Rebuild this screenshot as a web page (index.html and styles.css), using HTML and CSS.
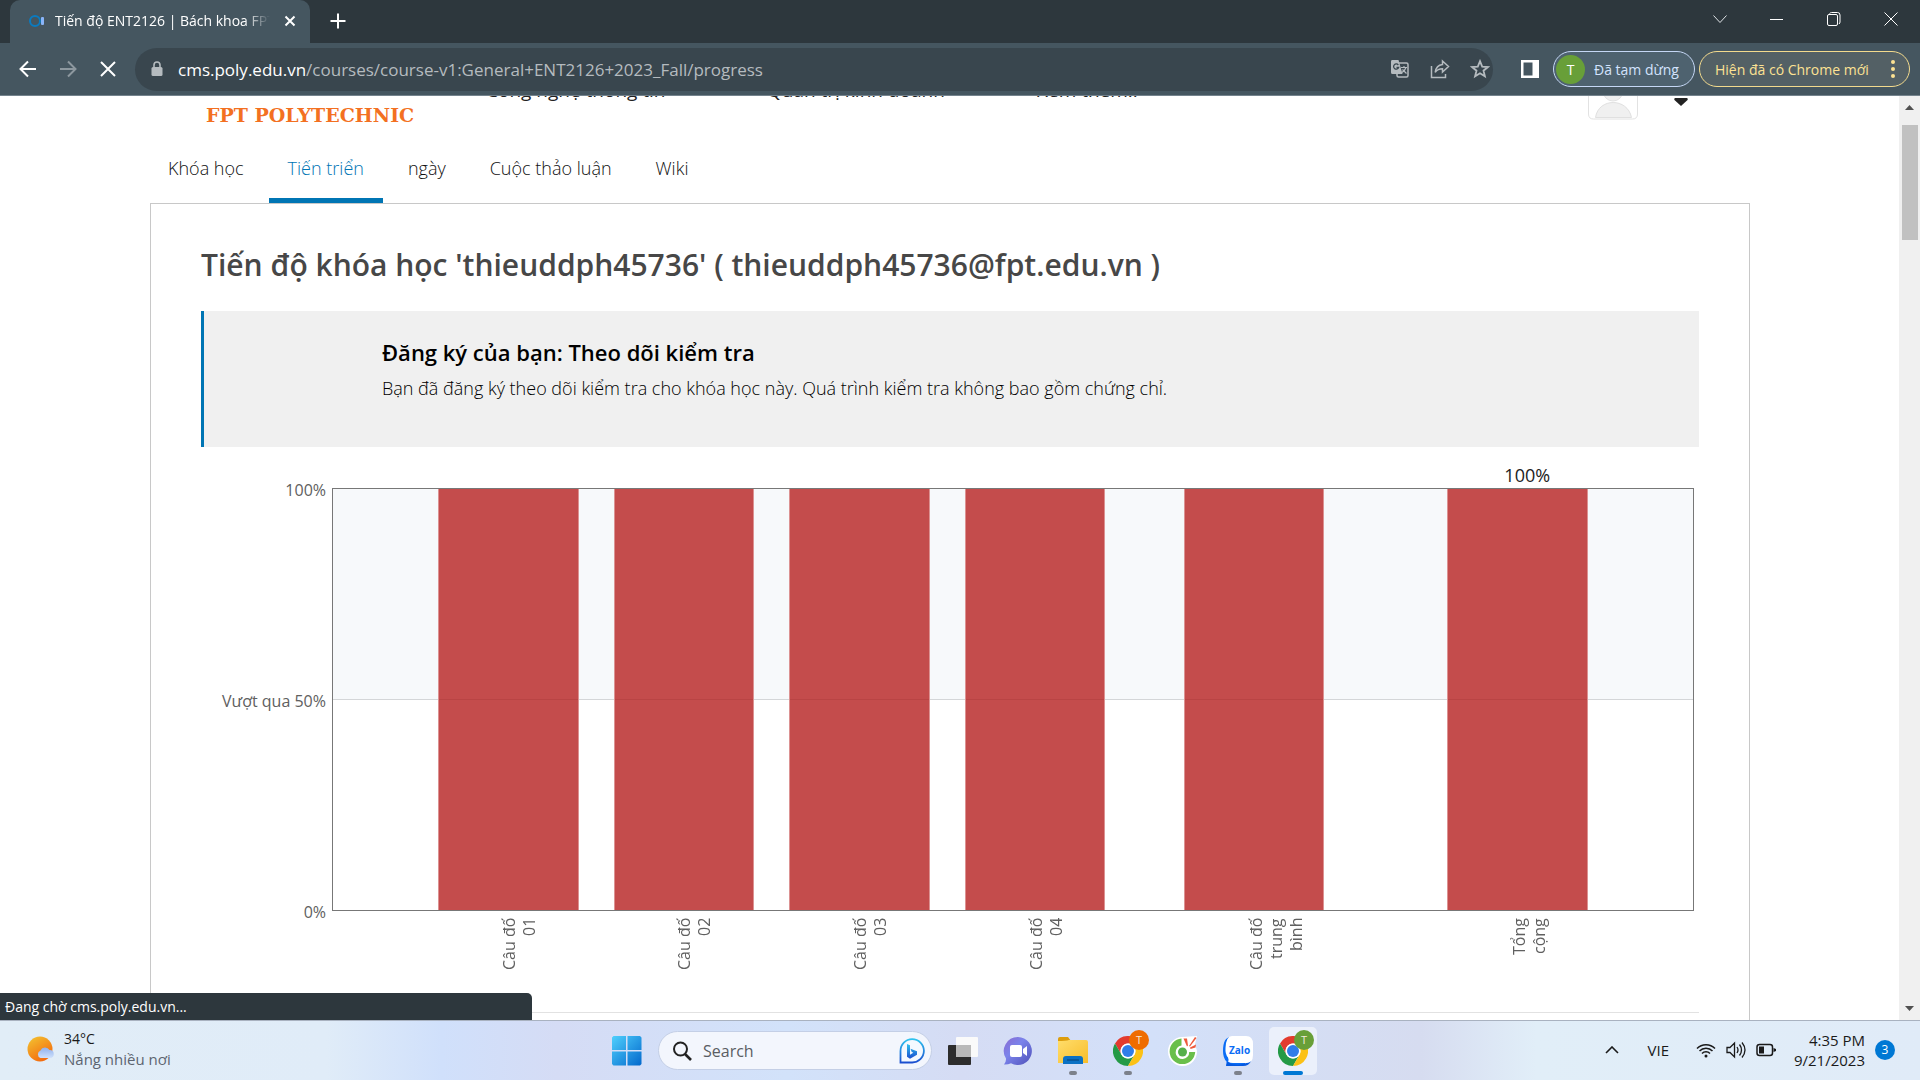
FILE: index.html
```html
<!DOCTYPE html>
<html lang="vi">
<head>
<meta charset="utf-8">
<title>Tiến độ ENT2126 | Bách khoa FPT</title>
<link rel="stylesheet" href="styles.css">
</head>
<body>
<div class="titlebar">
  <div class="tab">
    <svg class="tab-icon" width="18" height="16" viewBox="0 0 18 16"><circle cx="7" cy="8" r="5" fill="none" stroke="#0a7bc0" stroke-width="2"/><rect x="13" y="4" width="3" height="8" rx="1" fill="#8ab4f8"/></svg>
    <span class="tab-title">Tiến độ ENT2126 | Bách khoa FPT</span>
    <button class="plain" aria-label="Đóng thẻ"><svg width="12" height="12" viewBox="0 0 12 12" fill="none" stroke="#fff" stroke-width="2"><path d="M1.500 1.500l9 9M10.500 1.500l-9 9"/></svg></button>
  </div>
  <button class="plain new-tab" aria-label="Thẻ mới"><svg width="16" height="16" viewBox="0 0 16 16" stroke="#fff" stroke-width="2"><path d="M8 0.500v15M0.500 8h15"/></svg></button>
  <div class="window-controls">
    <button class="plain" aria-label="Tìm thẻ"><svg width="14" height="14" viewBox="0 0 14 14" fill="none" stroke="#dfe3e6"><path d="M.5 3.500l6.500 7 6.500-7"/></svg></button>
    <button class="plain" aria-label="Thu nhỏ"><svg width="14" height="14" viewBox="0 0 14 14" stroke="#fff"><path d="M0 7.500h13"/></svg></button>
    <button class="plain" aria-label="Khôi phục"><svg width="14" height="14" viewBox="0 0 14 14" fill="none" stroke="#fff"><rect x=".5" y="2.500" width="10" height="11" rx="1.500"/><path d="M2.500 1.500q1-1 2-1h6q2.500 0 2.500 2.500v7q0 1-1 2"/></svg></button>
    <button class="plain" aria-label="Đóng"><svg width="14" height="14" viewBox="0 0 14 14" stroke="#fff"><path d="M.5.5l13 13M13.500.5l-13 13"/></svg></button>
  </div>
</div>

<div class="toolbar">
  <div class="nav-buttons">
    <button class="plain" aria-label="Quay lại"><svg width="18" height="18" viewBox="0 0 18 18" fill="none" stroke="#fff" stroke-width="2"><path d="M17 9H2M9 1.500L1.500 9 9 16.500"/></svg></button>
    <button class="plain" aria-label="Tiến"><svg width="18" height="18" viewBox="0 0 18 18" fill="none" stroke="#8d989f" stroke-width="2"><path d="M1 9h15M9 1.500L16.500 9 9 16.500"/></svg></button>
    <button class="plain" aria-label="Dừng"><svg width="18" height="18" viewBox="0 0 18 18" stroke="#fff" stroke-width="2"><path d="M2 2l14 14M16 2L2 16"/></svg></button>
  </div>
  <div class="omnibox">
    <svg width="12" height="16" viewBox="0 0 12 16"><path d="M3 6V4a3 3 0 0 1 6 0v2" fill="none" stroke="#b5bbbf" stroke-width="1.600"/><rect x="0.500" y="6" width="11" height="9" rx="1.500" fill="#b5bbbf"/></svg>
    <span class="url"><b>cms.poly.edu.vn</b>/courses/course-v1:General+ENT2126+2023_Fall/progress</span>
    <div class="page-actions">
      <button class="plain" aria-label="Dịch"><svg width="20" height="20" viewBox="0 0 20 20"><rect x="7" y="4" width="11" height="14" rx="1.500" fill="none" stroke="#b5bbbf" stroke-width="1.500"/><path d="M2 1h6.500l4 14H2.500A1.500 1.500 0 0 1 1 13.500V2.500A1.500 1.500 0 0 1 2 1z" fill="#b5bbbf"/><path d="M8.300 6A2.600 2.600 0 1 0 8.700 8.300H6.500" fill="none" stroke="#39464e" stroke-width="1.300"/><path d="M11 8.500h6M14 7v1.500M16 8.500q-1 3-4 5M12.500 10.500l4 4" fill="none" stroke="#b5bbbf" stroke-width="1.200"/></svg></button>
      <button class="plain" aria-label="Chia sẻ"><svg width="20" height="20" viewBox="0 0 20 20" fill="none" stroke="#b5bbbf" stroke-width="1.500"><path d="M1.500 7v11.500h14V15"/><path d="M12.500 2l6 5.500-6 5.500v-3.200c-3.500 0-5.500 1-7.300 3.500.6-4.500 3-7.300 7.300-7.800z"/></svg></button>
      <button class="plain" aria-label="Dấu trang"><svg width="20" height="20" viewBox="0 0 20 20" fill="none" stroke="#b5bbbf" stroke-width="1.800"><path d="M10 2.200l2.200 5.400 5.700.4-4.400 3.700 1.400 5.600L10 14.200l-4.900 3.100 1.400-5.600L2.100 8l5.700-.4z"/></svg></button>
    </div>
  </div>
  <button class="plain side-panel" aria-label="Bảng điều khiển bên"><svg width="18" height="18" viewBox="0 0 18 18"><path fill="#fff" fill-rule="evenodd" d="M0 0h18v18H0zM2.500 2.500v13h9v-13z"/></svg></button>
  <button class="chip chip-profile"><span class="chip-avatar">T</span>Đã tạm dừng</button>
  <button class="chip chip-update">Hiện đã có Chrome mới<svg width="4" height="18" viewBox="0 0 4 18" fill="#fde293"><circle cx="2" cy="2" r="2"/><circle cx="2" cy="9" r="2"/><circle cx="2" cy="16" r="2"/></svg></button>
</div>

<div class="viewport">
  <div class="page">
    <header class="site-header">
      <span class="logo">FPT POLYTECHNIC</span>
      <nav class="site-nav">
        <a href="#">Công nghệ thông tin</a>
        <a href="#">Quản trị kinh doanh</a>
        <a href="#">Xem thêm..</a>
      </nav>
      <div class="user">
        <svg width="50" height="24" viewBox="0 0 50 24"><path d="M.5 0v18q0 5 5 5h39q5 0 5-5V0" fill="#fff" stroke="#e2e2e2"/><circle cx="25" cy="-5" r="10" fill="#f0f0f0" stroke="#e2e2e2"/><path d="M7.500 21.500c3-20 32-20 36 0z" fill="#f0f0f0" stroke="#e0e0e0"/></svg>
        <svg class="caret" width="14" height="8" viewBox="0 0 14 8"><path d="M1 0h12q1.500 1 0 2.500L7 8 1 2.500Q-.5 1 1 0z" fill="#222"/></svg>
      </div>
    </header>
    <nav class="course-tabs">
      <a href="#">Khóa học</a>
      <a href="#" class="active">Tiến triển</a>
      <a href="#">ngày</a>
      <a href="#">Cuộc thảo luận</a>
      <a href="#">Wiki</a>
    </nav>
    <main class="panel">
      <h1>Tiến độ khóa học 'thieuddph45736' ( thieuddph45736@fpt.edu.vn )</h1>
      <section class="notice">
        <h2>Đăng ký của bạn: Theo dõi kiểm tra</h2>
        <p>Bạn đã đăng ký theo dõi kiểm tra cho khóa học này. Quá trình kiểm tra không bao gồm chứng chỉ.</p>
      </section>
      <div class="chart">
        <div class="y-axis"><span>100%</span><span>Vượt qua 50%</span><span>0%</span></div>
        <div class="plot-column">
          <div class="values columns"><span class="c6">100%</span></div>
          <div class="plot columns">
            <i class="bar c1"></i><i class="bar c2"></i><i class="bar c3"></i><i class="bar c4"></i><i class="bar c5"></i><i class="bar c6"></i>
          </div>
          <div class="x-axis columns">
            <span class="c1">Câu đố<br>01</span>
            <span class="c2">Câu đố<br>02</span>
            <span class="c3">Câu đố<br>03</span>
            <span class="c4">Câu đố<br>04</span>
            <span class="c5">Câu đố<br>trung<br>bình</span>
            <span class="c6">Tổng<br>cộng</span>
          </div>
        </div>
      </div>
      <hr>
    </main>
  </div>
  <div class="scrollbar">
    <svg width="9" height="5" viewBox="0 0 9 5"><path d="M4.500 0L9 5H0z" fill="#505050"/></svg>
    <div class="track"><div class="thumb"></div></div>
    <svg width="9" height="5" viewBox="0 0 9 5"><path d="M0 0h9L4.500 5z" fill="#505050"/></svg>
  </div>
  <div class="status">Đang chờ cms.poly.edu.vn...</div>
</div>

<svg width="0" height="0" class="defs">
  <defs>
    <linearGradient id="win" x1="0" y1="0" x2="1" y2="1"><stop offset="0" stop-color="#4fd0fd"/><stop offset="1" stop-color="#0268cc"/></linearGradient>
    <linearGradient id="sun" x1="0" y1="0" x2=".6" y2="1"><stop offset="0" stop-color="#f3c632"/><stop offset="1" stop-color="#f36a0e"/></linearGradient>
    <linearGradient id="cloud" x1="0" y1="0" x2="0" y2="1"><stop offset="0" stop-color="#8fb0ec"/><stop offset="1" stop-color="#cfe0fb"/></linearGradient>
    <linearGradient id="bing" x1="0" y1="0" x2="0" y2="1"><stop offset="0" stop-color="#2fc3ee"/><stop offset="1" stop-color="#1b4fd0"/></linearGradient>
    <linearGradient id="chat" x1="0" y1="0" x2="1" y2="1"><stop offset="0" stop-color="#8a6ad0"/><stop offset=".4" stop-color="#7b83eb"/><stop offset="1" stop-color="#4f50b8"/></linearGradient>
    <linearGradient id="folder" x1="0" y1="0" x2="1" y2="1"><stop offset="0" stop-color="#ffdd6b"/><stop offset="1" stop-color="#f8bd2a"/></linearGradient>
    <symbol id="chrome" viewBox="0 0 30 30">
      <path fill="#e33b2e" d="M2 7.500A15 15 0 0 1 28 7.500H15a7.500 7.500 0 0 0-6.500 11.200z"/>
      <path fill="#249a46" d="M2 7.500A15 15 0 0 0 15 30l6.500-11.250a7.500 7.500 0 0 1-13 0z"/>
      <path fill="#fbc116" d="M28 7.500A15 15 0 0 1 15 30l6.500-11.250A7.500 7.500 0 0 0 15 7.500z"/>
      <circle cx="15" cy="15" r="7.500" fill="#fff"/><circle cx="15" cy="15" r="6" fill="#2f7de9"/>
    </symbol>
  </defs>
</svg>

<footer class="taskbar">
  <button class="plain weather">
    <svg width="28" height="28" viewBox="0 0 28 28"><circle cx="14" cy="13" r="12.500" fill="url(#sun)"/><path d="M14.500 22a4 4 0 0 1 0-7.500 5 5 0 0 1 9-.5 4 4 0 0 1 .500 8z" fill="url(#cloud)"/></svg>
    <span>34°C<br><small>Nắng nhiều nơi</small></span>
  </button>
  <div class="apps">
    <button class="plain app" aria-label="Start"><svg width="30" height="30" viewBox="0 0 30 30"><path fill="url(#win)" d="M1.500 0H14v14H0V1.500zM15.500 0H28l1.500 1.500V14h-14zM0 15.500h14v14H1.500L0 28zM15.500 15.500h14V28l-1.500 1.500H15.500z"/></svg></button>
    <label class="search">
      <svg width="20" height="20" viewBox="0 0 20 20" fill="none" stroke="#222" stroke-width="2"><circle cx="8.500" cy="8" r="6.500"/><path d="M13 13l6 6" stroke-width="2.600"/></svg>
      <input type="text" placeholder="Search" aria-label="Search">
      <svg width="26" height="26" viewBox="0 0 26 26"><path d="M1.500 24.500V13A11.700 11.700 0 1 1 13 24.500z" fill="#f4f9ff" stroke="url(#bing)" stroke-width="1.800"/><path d="M8 6l3 1.200v9.600l3.300-2-1.700-1-1.100-3 6.500 2.500v3.500L11 20.700l-3-1.900z" fill="url(#bing)"/></svg>
    </label>
    <button class="plain app" aria-label="Task view"><svg width="30" height="28" viewBox="0 0 30 28"><rect x="0" y="8" width="23" height="20" rx="1" fill="#2d2d2d"/><rect x="8" y="0" width="22" height="20" rx="1" fill="#fafafa"/><path d="M8 8h15v12H8z" fill="#b9b9b9"/></svg></button>
    <button class="plain app" aria-label="Chat"><svg width="30" height="30" viewBox="0 0 30 30"><path d="M15 1a14 14 0 1 1-7 26.200q-3 1.500-7 1.300 2.300-3 2-6A14 14 0 0 1 15 1z" fill="url(#chat)"/><rect x="7" y="9" width="12" height="12" rx="2" fill="#fff"/><path d="M20 13l4-3v10l-4-3z" fill="#fff"/></svg></button>
    <button class="plain app running" aria-label="File Explorer"><svg width="30" height="28" viewBox="0 0 30 28"><path d="M0 2q0-2 2-2h8l3 4H0z" fill="#dd9d0c"/><path d="M0 6V4q8 0 11-1h17q2 0 2 2v21H0z" fill="url(#folder)"/><path d="M5 27v-5q0-3 3-3h14q3 0 3 3v5z" fill="#0c71c4"/><path d="M9 23h12" stroke="#08508f" stroke-width="1.500"/></svg></button>
    <button class="plain app running" aria-label="Chrome"><svg width="30" height="30"><use href="#chrome"/></svg><span class="badge orange">T</span></button>
    <button class="plain app" aria-label="Cốc Cốc"><svg width="30" height="30" viewBox="0 0 30 30"><path d="M14 1L29 0l-2 8 2 7A14.500 14.500 0 1 1 14 1z" fill="#fff"/><path d="M13.500 9.500A6.800 6.800 0 1 0 21.200 16h6A12.800 12.800 0 1 1 13.500 2.500z" fill="#6abf4b"/><circle cx="14.500" cy="16" r="4.500" fill="#55b04a"/><path d="M15.500 2.500l3.500 8 1-1-1-7zM27 1l-6 9 1 .5L28.500 2zM28 8.500l-6 3 .5 1.500 5-1.500z" fill="#ee5a3c"/></svg></button>
    <button class="plain app running" aria-label="Zalo"><svg width="30" height="30" viewBox="0 0 30 30"><path d="M8 1h14v28H8q-2 0-5 .5 1-2 .5-4Q0 22 0 15 0 1 8 1z" fill="#0a6cf5"/><path d="M4 26q10 6 24-1-2 5-8 5H3z" fill="#0659df"/><path d="M9 0h14q7 0 7 8v11q0 8-7 8H10q-3 0-5-1.500 1-2 0-4Q2 18 2.500 12 3 0 9 0z" fill="#fff"/><text x="6" y="18" class="zalo">Zalo</text></svg></button>
    <button class="plain app running current" aria-label="Chrome"><svg width="30" height="30"><use href="#chrome"/></svg><span class="badge green">T</span></button>
  </div>
  <div class="tray">
    <button class="plain" aria-label="Biểu tượng ẩn"><svg width="14" height="8" viewBox="0 0 14 8" fill="none" stroke="#1a1a1a" stroke-width="1.600"><path d="M1 7l6-6 6 6"/></svg></button>
    <span class="lang">VIE</span>
    <div class="quick">
      <svg width="20" height="16" viewBox="0 0 20 16" fill="none" stroke="#1a1a1a" stroke-width="1.500"><path d="M1 6.500a12.500 12.500 0 0 1 18 0M3.500 9a9 9 0 0 1 13 0M6 11.500a5.500 5.500 0 0 1 8 0"/><circle cx="10" cy="14" r="1.500" fill="#1a1a1a" stroke="none"/></svg>
      <svg width="20" height="18" viewBox="0 0 20 18" fill="none" stroke="#1a1a1a" stroke-width="1.300"><path d="M1 6.500h3L8.500 2v14L4 11.500H1zM11 6q2 3 0 6M13.500 3.500q4 5.500 0 11M16 1.500q6 7.500 0 15"/></svg>
      <svg width="20" height="14" viewBox="0 0 20 14"><rect x="1" y="1.500" width="15.500" height="11" rx="2.500" fill="none" stroke="#1a1a1a" stroke-width="1.500"/><path d="M3 3.500h5v7H3zM17.500 5l2.500 1v2l-2.500 1z" fill="#1a1a1a"/></svg>
    </div>
    <span class="clock">4:35 PM<br>9/21/2023</span>
    <span class="count">3</span>
  </div>
</footer>
</body>
</html>
```

FILE: styles.css
```css
* { box-sizing: border-box; }
body {
  margin: 0;
  height: 100vh;
  display: flex;
  flex-direction: column;
  overflow: hidden;
  font-family: "Open Sans", "Noto Sans", sans-serif;
  font-size: 16px;
  background: #fff;
}
a { color: inherit; text-decoration: none; }
.plain {
  border: 0;
  padding: 0;
  background: none;
  font: inherit;
  color: inherit;
  display: flex;
  align-items: center;
  justify-content: center;
}
.defs { position: absolute; }

/* Browser window */
.titlebar {
  flex: 0 0 43px;
  display: flex;
  background: #2d373d;
  padding: 0 1px 0 10px;
}
.tab {
  width: 300px;
  display: flex;
  align-items: center;
  gap: 9px;
  padding: 0 14px 2px 18px;
  background: #455660;
  border-radius: 10px 10px 0 0;
  color: #fff;
  font-size: 14px;
}
.tab-title {
  flex: 1;
  margin-right: 5px;
  overflow: hidden;
  white-space: nowrap;
  -webkit-mask-image: linear-gradient(to right, #000 88%, transparent);
  mask-image: linear-gradient(to right, #000 88%, transparent);
}
.new-tab { width: 55px; padding-bottom: 2px; }
.window-controls { margin-left: auto; display: flex; padding-bottom: 6px; }
.window-controls .plain { width: 57px; }

.toolbar {
  flex: 0 0 53px;
  display: flex;
  align-items: center;
  padding: 0 10px 0 8px;
  background: #455660;
  border-bottom: 1px solid #74838d;
}
.nav-buttons { display: flex; width: 127px; }
.nav-buttons .plain { width: 40px; height: 40px; }
.omnibox {
  flex: 1;
  height: 43px;
  display: flex;
  align-items: center;
  border-radius: 22px;
  background: #39464e;
  padding: 0 3px 0 16px;
  color: #b5bbbf;
}
.page-actions { display: flex; gap: 20px; }
.page-actions .plain { width: 20px; }
.url { flex: 1; margin-left: 15px; font-size: 17px; }
.url b { font-weight: 400; color: #fff; }
.side-panel { width: 60px; padding-left: 14px; }
.chip {
  height: 36px;
  display: flex;
  align-items: center;
  border-radius: 18px;
  font: 14px "Open Sans", "Noto Sans", sans-serif;
  white-space: nowrap;
}
.chip-profile {
  width: 142px;
  gap: 9px;
  padding: 0 0 0 2px;
  color: #d3e3fd;
  background: #4e626f;
  border: 1px solid #c5d7f5;
}
.chip-avatar {
  width: 29px;
  height: 29px;
  line-height: 29px;
  border-radius: 50%;
  background: #689f38;
  color: #fff;
}
.chip-update {
  width: 211px;
  margin-left: 4px;
  padding: 0 14px 0 15px;
  justify-content: space-between;
  color: #fde293;
  background: #536065;
  border: 1px solid #f3da8d;
}

/* Web page */
.viewport { flex: 1; min-height: 0; display: flex; position: relative; }
.page {
  flex: 1;
  display: flex;
  flex-direction: column;
  overflow: hidden;
  padding: 0 149px 0 150px;
}
.site-header {
  flex: 0 0 46px;
  display: flex;
  align-items: flex-start;
  overflow: hidden;
  padding-left: 56px;
}
.logo {
  width: 280px;
  padding-top: 7px;
  font: 700 19px/24px "DejaVu Serif", serif;
  color: #f37021;
  white-space: nowrap;
}
.site-nav {
  display: grid;
  grid-template-columns: 281px 270px auto;
  margin-top: -20px;
  font-size: 19px;
  line-height: 28px;
  color: #222;
}
.user { margin-left: auto; display: flex; gap: 36px; padding-right: 62px; }
.caret { margin-top: 2px; }
.course-tabs {
  flex: 0 0 61px;
  display: flex;
  gap: 6px;
  margin-left: -1px;
  font-size: 18px;
  font-weight: 300;
  line-height: 52px;
  color: #111;
}
.course-tabs a { padding: 0 19px; }
.course-tabs .active { color: #0075b4; border-bottom: 5px solid #0075b4; }
.panel {
  flex: 1 0 auto;
  border: 1px solid #c8c8c8;
  border-bottom: 0;
  padding: 40px 50px 0;
}
h1 {
  margin: 0 0 25px;
  font-size: 30px;
  line-height: 42px;
  font-weight: 600;
  color: #474747;
}
.notice {
  height: 136px;
  padding: 24px 0 0 178px;
  border-left: 3px solid #0075b4;
  background: #f0f0f0;
  color: #000;
}
.notice h2 { margin: 0; font-size: 22px; line-height: 34px; font-weight: 600; }
.notice p { margin: 5px 0 0; font-size: 18px; line-height: 28px; font-weight: 300; }
.chart { display: flex; color: #606060; }
.y-axis {
  width: 131px;
  height: 444px;
  margin-top: 32px;
  padding-right: 6px;
  display: flex;
  flex-direction: column;
  justify-content: space-between;
  text-align: right;
  line-height: 22px;
}
.plot-column { flex: 1; margin-right: 5px; }
.columns {
  display: grid;
  grid-template-columns: 12fr 16fr 4fr 16fr 4fr 16fr 4fr 16fr 9fr 16fr 14fr 16fr 12fr;
}
.c1 { grid-column: 2; }
.c2 { grid-column: 4; }
.c3 { grid-column: 6; }
.c4 { grid-column: 8; }
.c5 { grid-column: 10; }
.c6 { grid-column: 12; }
.values {
  height: 41px;
  padding-top: 14px;
  text-align: center;
  font-size: 18px;
  line-height: 28px;
  color: #222;
}
.values span { padding-left: 18px; }
.plot {
  height: 423px;
  border: 1px solid #777;
  background: linear-gradient(#f7f9fb 210px, #d4d6d8 210px, #d4d6d8 211px, #fff 211px);
}
.bar {
  background: linear-gradient(#c44c4c 210px, #b94444 210px, #b94444 211px, #c44c4c 211px);
  border: solid #dc9292;
  border-width: 0 1px;
}
.x-axis { height: 101px; padding-top: 7px; line-height: 20px; }
.x-axis span {
  writing-mode: vertical-rl;
  transform: rotate(180deg);
  text-align: right;
  justify-self: start;
  margin-left: calc(50% - 9px);
}
hr { margin: 0; border: 0; border-top: 1px solid #e2e2e2; }
.scrollbar {
  width: 21px;
  display: flex;
  flex-direction: column;
  align-items: center;
  padding: 9px 0;
  background: #f0f0f0;
}
.track { flex: 1; padding: 15px 0; }
.thumb { width: 16px; height: 115px; background: #c1c1c1; }
.status {
  position: absolute;
  left: 0;
  bottom: 0;
  width: 532px;
  height: 27px;
  padding-left: 5px;
  border-radius: 0 5px 0 0;
  background: #2d373d;
  color: #fff;
  font-size: 14px;
  line-height: 27px;
}

/* Taskbar */
.taskbar {
  flex: 0 0 60px;
  display: grid;
  grid-template-columns: 1fr auto 1fr;
  align-items: center;
  border-top: 1px solid #a9b2c0;
  background: linear-gradient(to right, #e1edf7, #e0ecf8 17%, #d0e0fb 23%, #d5dcf5 29%, #d2e2fa 41%, #d5dcf4 50%, #d3e0f9 60%, #d6dcf0 74%, #e1eef8 80%, #e0ebf8);
  color: #1a1a1a;
  font-size: 15px;
  line-height: 20px;
}
.weather { justify-self: start; gap: 10px; padding: 0 0 2px 26px; text-align: left; font-size: 14px; }
.weather small { font-size: 15px; color: #5c6470; }
.apps { display: flex; align-items: center; gap: 7px; }
.app { position: relative; width: 48px; height: 48px; border-radius: 5px; }
.running::after {
  content: "";
  position: absolute;
  left: 20px;
  bottom: 0;
  width: 8px;
  height: 4px;
  border-radius: 2px;
  background: #7c818b;
}
.current { background: #ebf0fb; }
.current::after { left: 14px; width: 20px; background: #0078d4; }
.badge {
  position: absolute;
  top: 3px;
  right: 3px;
  width: 20px;
  height: 20px;
  border-radius: 50%;
  font-size: 11px;
  color: #f3ead8;
}
.orange { background: #ef6c00; }
.green { background: #689f38; }
.zalo { font: 700 10px "Open Sans", sans-serif; fill: #0a6cf5; }
.search {
  width: 274px;
  height: 39px;
  display: flex;
  align-items: center;
  padding: 0 6px 0 13px;
  border: 1px solid #c4cfe6;
  border-radius: 20px;
  background: #f3f6fd;
}
.search input {
  flex: 1;
  min-width: 0;
  margin-left: 11px;
  padding: 0;
  border: 0;
  outline: 0;
  background: none;
  font: 16px "Open Sans", sans-serif;
}
.search input::placeholder { color: #5a5d63; opacity: 1; }
.tray { justify-self: end; display: flex; align-items: center; padding: 0 25px 2px 0; }
.lang { margin: 0 27px 0 29px; }
.quick { display: flex; align-items: center; gap: 10px; }
.clock { width: 89px; text-align: right; }
.count {
  width: 20px;
  height: 20px;
  margin-left: 10px;
  border-radius: 50%;
  background: #0078d4;
  color: #fff;
  font-size: 12px;
  text-align: center;
}
```
